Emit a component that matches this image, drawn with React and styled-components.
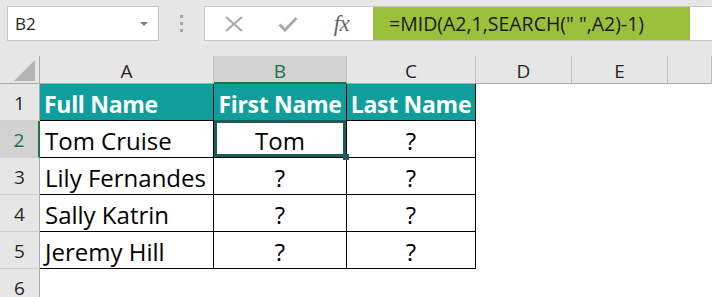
import React from 'react';
import styled, { createGlobalStyle, css } from 'styled-components';

const Global = createGlobalStyle`
  html, body { margin: 0; padding: 0; background: #ffffff; }
  * { box-sizing: border-box; }
`;

const Page = styled.div`
  width: 712px;
  height: 297px;
  overflow: hidden;
  background: #ffffff;
  font-family: 'Open Sans', 'Liberation Sans', sans-serif;
`;

const Toolbar = styled.div`
  height: 56px;
  background: #e6e6e6;
  display: flex;
  align-items: flex-start;
  padding: 6px 0 0 7px;
`;

const NameBox = styled.div`
  width: 152px;
  height: 35px;
  background: #ffffff;
  border: 1px solid #c6c6c6;
  display: flex;
  align-items: center;
  justify-content: space-between;
  padding: 0 10px 0 7px;
  font-size: 17px;
  color: #262626;
`;

const Caret = styled.span`
  width: 0;
  height: 0;
  border-left: 4px solid transparent;
  border-right: 4px solid transparent;
  border-top: 4px solid #7a7a7a;
`;

const Grip = styled.div`
  width: 45px;
  height: 35px;
  display: flex;
  flex-direction: column;
  align-items: center;
  justify-content: center;
  gap: 4px;
`;

const Dot = styled.span`
  width: 3px;
  height: 3px;
  background: #a8a8a8;
`;

const FormulaBar = styled.div`
  flex: 1;
  height: 35px;
  margin-right: -4px;
  background: #ffffff;
  border: 1px solid #c6c6c6;
  display: flex;
`;

const Buttons = styled.div`
  width: 168px;
  display: flex;
  align-items: center;
  padding-left: 17px;
  gap: 31px;
`;

const IconBtn = styled.span`
  width: 23px;
  display: flex;
  justify-content: center;
  align-items: center;
`;

const Fx = styled.span`
  font-family: 'Liberation Serif', 'DejaVu Serif', serif;
  font-style: italic;
  font-size: 23px;
  color: #666666;
  letter-spacing: -0.5px;
  line-height: 1;
`;

const Formula = styled.div`
  width: 317px;
  background: #9bc13c;
  display: flex;
  align-items: center;
  padding-left: 16px;
  font-size: 19.5px;
  color: #1a1a1a;
  white-space: pre;
`;

const Sheet = styled.div`
  display: grid;
  grid-template-columns: 40px 174px 133px 129px 96px 96px 1fr;
  grid-template-rows: 28px repeat(6, 37px);
`;

const headerBase = css`
  background: ${p => (p.$active ? '#d2d2d2' : '#e6e6e6')};
  color: ${p => (p.$active ? '#217346' : '#262626')};
  display: flex;
  align-items: center;
  justify-content: center;
  font-size: 19px;
`;

const Corner = styled.div`
  background: #e6e6e6;
  border-right: 1px solid #ababab;
  border-bottom: 1px solid #ababab;
  position: relative;
  &::after {
    content: '';
    position: absolute;
    right: 4px;
    bottom: 2px;
    width: 0;
    height: 0;
    border-left: 21px solid transparent;
    border-bottom: 21px solid #b4b4b4;
  }
`;

const ColHead = styled.div`
  ${headerBase}
  border-right: 1px solid #bfbfbf;
  border-bottom: ${p => (p.$active ? '2px solid #217346' : '1px solid #ababab')};
  padding-top: ${p => (p.$active ? '3px' : '2px')};
`;

const RowHead = styled.div`
  ${headerBase}
  border-right: ${p => (p.$active ? '2px solid #217346' : '1px solid #ababab')};
  border-bottom: 1px solid #d0d0d0;
  padding-top: 2px;
`;

const Cell = styled.div`
  position: relative;
  display: flex;
  align-items: center;
  justify-content: ${p => (p.$center ? 'center' : 'flex-start')};
  padding: 3px 0 0 5px;
  padding-left: ${p => (p.$center ? '0' : '5px')};
  font-size: 24px;
  color: #000000;
  white-space: nowrap;
  background: ${p => (p.$head ? '#0f9e9c' : '#ffffff')};
  ${p => p.$head && css`
    color: #ffffff;
    font-weight: 700;
    font-size: 23px;
    padding-left: ${p.$center ? '0' : '4px'};
    letter-spacing: -0.3px;
  `}
  ${p => p.$boxed && css`
    border-right: 1px solid #000000;
    border-bottom: 1px solid #000000;
  `}
  ${p => p.$selected && css`
    &::after {
      content: '';
      position: absolute;
      inset: -1px 0 0 0;
      border: 3px solid #1d5c56;
    }
    &::before {
      content: '';
      position: absolute;
      right: -3px;
      bottom: -3px;
      width: 6px;
      height: 6px;
      background: #1d5c56;
      z-index: 1;
    }
  `}
`;

const columns = ['A', 'B', 'C', 'D', 'E', ''];

const rows = [
  ['Full Name', 'First Name', 'Last Name'],
  ['Tom Cruise', 'Tom', '?'],
  ['Lily Fernandes', '?', '?'],
  ['Sally Katrin', '?', '?'],
  ['Jeremy Hill', '?', '?'],
];

function App() {
  return (
    <>
      <Global />
      <Page>
        <Toolbar>
          <NameBox>
            B2
            <Caret />
          </NameBox>
          <Grip>
            <Dot />
            <Dot />
            <Dot />
          </Grip>
          <FormulaBar>
            <Buttons>
              <IconBtn>
                <svg width="20" height="16" viewBox="0 0 20 16">
                  <path d="M2 1 L18 15 M18 1 L2 15" stroke="#a9a9a9" strokeWidth="2.2" fill="none" />
                </svg>
              </IconBtn>
              <IconBtn>
                <svg width="20" height="16" viewBox="0 0 20 16">
                  <path d="M1.5 8.5 L7 14 L18.5 2" stroke="#a9a9a9" strokeWidth="3" fill="none" />
                </svg>
              </IconBtn>
              <IconBtn>
                <Fx>fx</Fx>
              </IconBtn>
            </Buttons>
            <Formula>=MID(A2,1,SEARCH(" ",A2)-1)</Formula>
          </FormulaBar>
        </Toolbar>

        <Sheet>
          <Corner />
          {columns.map((c, i) => (
            <ColHead key={i} $active={c === 'B'}>{c}</ColHead>
          ))}

          {[0, 1, 2, 3, 4, 5].map(r => (
            <React.Fragment key={r}>
              <RowHead $active={r === 1}>{r + 1}</RowHead>
              {[0, 1, 2].map(c => (
                <Cell
                  key={c}
                  $boxed={r < 5}
                  $head={r === 0}
                  $center={c > 0}
                  $selected={r === 1 && c === 1}
                >
                  {rows[r] ? rows[r][c] : ''}
                </Cell>
              ))}
              <Cell />
              <Cell />
              <Cell />
            </React.Fragment>
          ))}
        </Sheet>
      </Page>
    </>
  );
}

export default App;
